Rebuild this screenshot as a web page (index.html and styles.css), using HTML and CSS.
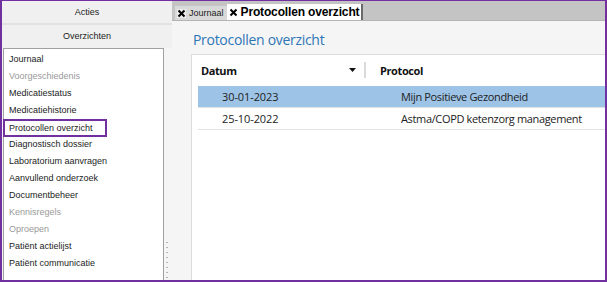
FILE: index.html
```html
<!DOCTYPE html>
<html lang="nl">
<head>
    <meta charset="UTF-8">
    <meta name="viewport" content="width=device-width, initial-scale=1.0">
    <title>Protocollen overzicht</title>
    <link rel="stylesheet" href="styles.css">
</head>
<body>
<div class="frame">
    <aside class="side">
        <div class="side_head side_head_top">Acties</div>
        <div class="side_head">Overzichten</div>
        <div class="side_body">
            <ul class="nav_list">
                <li>Journaal</li>
                <li class="off">Voorgeschiedenis</li>
                <li>Medicatiestatus</li>
                <li>Medicatiehistorie</li>
                <li class="mark">Protocollen overzicht</li>
                <li>Diagnostisch dossier</li>
                <li>Laboratorium aanvragen</li>
                <li>Aanvullend onderzoek</li>
                <li>Documentbeheer</li>
                <li class="off">Kennisregels</li>
                <li class="off">Oproepen</li>
                <li>Patiënt actielijst</li>
                <li>Patiënt communicatie</li>
            </ul>
            <div class="grip">
                <span></span><span></span><span></span><span></span>
                <span></span><span></span><span></span><span></span>
            </div>
        </div>
    </aside>
    <main class="work">
        <div class="tabs">
            <div class="tab">
                <svg class="tab_x" width="9" height="9" viewBox="0 0 9 9"><rect width="9" height="9" fill="#ececec"/><path d="M1.5 1.5L7.5 7.5M7.5 1.5L1.5 7.5" stroke="#000" stroke-width="2" fill="none"/></svg>
                <span>Journaal</span>
            </div>
            <div class="tab tab_active">
                <svg class="tab_x" width="9" height="9" viewBox="0 0 9 9"><path d="M1.5 1.5L7.5 7.5M7.5 1.5L1.5 7.5" stroke="#000" stroke-width="2" fill="none"/></svg>
                <span>Protocollen overzicht</span>
            </div>
        </div>
        <div class="pane">
            <h1 class="pane_title">Protocollen overzicht</h1>
            <div class="grid_box">
                <div class="grid_head">
                    <div class="col_date">
                        <span>Datum</span>
                        <svg class="sort" width="7" height="4" viewBox="0 0 7 4"><path d="M0 0H7L3.5 4Z" fill="#111"/></svg>
                        <span class="sep"></span>
                    </div>
                    <div class="col_prot">Protocol</div>
                </div>
                <div class="grid_row row_sel">
                    <div class="col_date">30-01-2023</div>
                    <div class="col_prot">Mijn Positieve Gezondheid</div>
                </div>
                <div class="grid_row">
                    <div class="col_date">25-10-2022</div>
                    <div class="col_prot">Astma/COPD ketenzorg management</div>
                </div>
            </div>
        </div>
    </main>
</div>
</body>
</html>
```

FILE: styles.css
```css
*{
    box-sizing: border-box;
}
body{
    margin: 0;
    background-color: #ffffff;
    font-family: "Liberation Sans", Arial, sans-serif;
    font-size: 9px;
    color: #1c1c1c;
}
.frame{
    width: 607px;
    height: 282px;
    display: flex;
    border: 2px solid #7030a0;
    border-top-width: 1px;
    background-color: #f5f5f5;
}
.side{
    width: 170px;
    display: flex;
    flex-direction: column;
}
.side_head{
    height: 23px;
    line-height: 23px;
    text-align: center;
    background-color: #f0f0f0;
}
.side_head_top{
    height: 24px;
    line-height: 22px;
    border-bottom: 2px solid #e2e2e2;
}
.side_body{
    flex: 1;
    display: flex;
}
.nav_list{
    width: 161px;
    margin: 0 0 0 1px;
    padding: 2px 0 0 0;
    list-style: none;
    background-color: #ffffff;
    border: 1px solid #a0a0a0;
    border-bottom: none;
}
.nav_list li{
    height: 17px;
    line-height: 17px;
    padding-left: 5px;
    white-space: nowrap;
}
.nav_list .off{
    color: #9a9a9a;
}
.nav_list .mark{
    width: 104px;
    height: 18px;
    line-height: 14px;
    margin: 0 0 -1px -1px;
    padding-left: 4px;
    border: 2px solid #7030a0;
}
.grip{
    flex: 1;
    display: flex;
    flex-direction: column;
    justify-content: flex-end;
    gap: 4px;
    padding: 0 0 2px 2px;
}
.grip span{
    width: 2px;
    height: 1px;
    background-color: #b5b5b5;
}
.work{
    flex: 1;
    display: flex;
    flex-direction: column;
}
.tabs{
    height: 20px;
    display: flex;
    align-items: flex-end;
    padding-left: 3px;
    background-color: #c4c4c4;
    border-bottom: 1px solid #b4b4b4;
}
.tab{
    height: 14px;
    display: flex;
    align-items: center;
    gap: 3px;
    padding: 0 3px 0 2px;
    font-size: 9px;
    background-color: #d9d9d9;
}
.tab_active{
    height: 16px;
    gap: 3px;
    padding: 0 2px 0 2px;
    font-size: 12px;
    font-weight: bold;
    letter-spacing: -0.15px;
    color: #000000;
    background-color: #ffffff;
    border-right: 2px solid #6a6a6a;
}
.tab_x{
    flex: none;
}
.pane{
    flex: 1;
    display: flex;
    flex-direction: column;
    padding-left: 19px;
}
.pane_title{
    height: 33px;
    margin: 0;
    padding: 9px 0 0 2px;
    font-family: "Open Sans", sans-serif;
    font-size: 14px;
    font-weight: normal;
    letter-spacing: -0.3px;
    line-height: 20px;
    color: #2e75b6;
}
.grid_box{
    flex: 1;
    padding: 6px 0 0 6px;
    background-color: #ffffff;
    border-top: 1px solid #dcdcdc;
    border-left: 1px solid #dcdcdc;
    font-family: "Open Sans", sans-serif;
    font-size: 11px;
    color: #222222;
}
.grid_head{
    height: 18px;
    display: flex;
    align-items: center;
    margin-bottom: 7px;
    font-weight: bold;
    letter-spacing: -0.4px;
    color: #111111;
}
.grid_head .col_date{
    display: flex;
    align-items: center;
    padding-left: 3px;
}
.sort{
    margin-left: auto;
}
.sep{
    width: 2px;
    height: 16px;
    margin-left: 8px;
    background-color: #dadada;
}
.grid_head .col_prot{
    padding-left: 14px;
}
.col_date{
    width: 168px;
    flex: none;
}
.grid_row{
    height: 22px;
    display: flex;
    align-items: center;
    border-bottom: 1px solid #e2e2e2;
}
.grid_row .col_date{
    padding-left: 24px;
    letter-spacing: -0.1px;
}
.grid_row .col_prot{
    padding-left: 35px;
    letter-spacing: -0.35px;
}
.row_sel{
    background-color: #9dc3e6;
}
```
